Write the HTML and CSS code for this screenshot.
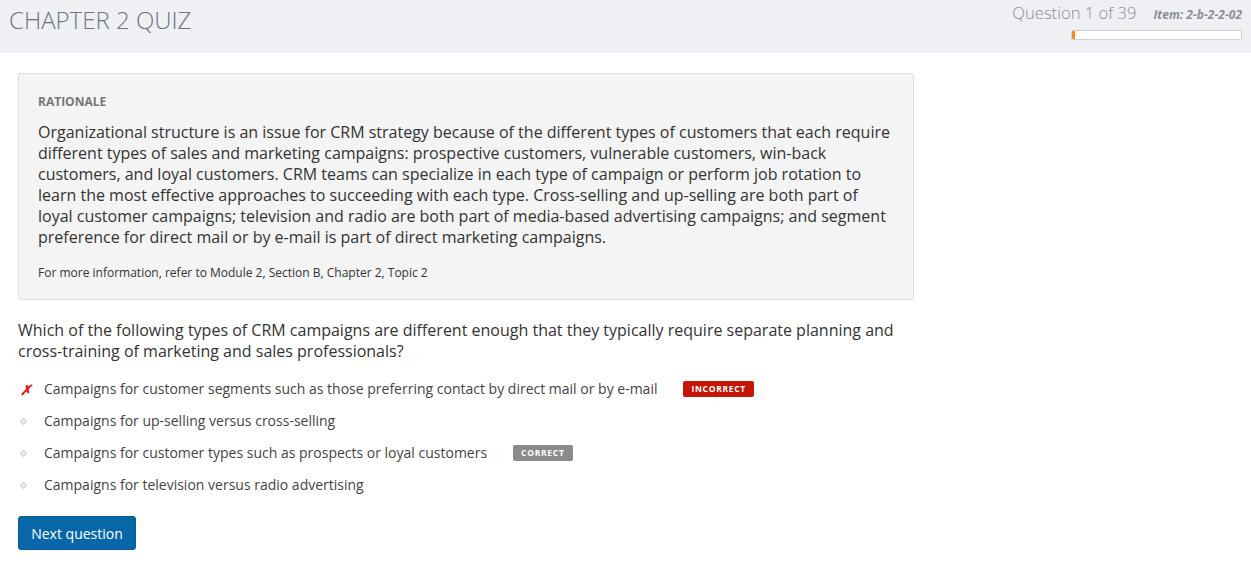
FILE: index.html
```html
<!DOCTYPE html>
<html>
<head>
<meta charset="utf-8">
<link rel="stylesheet" href="styles.css">
</head>
<body>
<header class="top">
  <h1 class="title">CHAPTER 2 QUIZ</h1>
  <div class="status">
    <div class="status-row">
      <span class="qnum">Question 1 of 39</span>
      <span class="item">Item: 2-b-2-2-02</span>
    </div>
    <div class="progress"><div class="progress-fill" style="width:2%"></div></div>
  </div>
</header>
<main class="content">
  <section class="rationale">
    <div class="rationale-label">RATIONALE</div>
    <p class="rationale-text">Organizational structure is an issue for CRM strategy because of the different types of customers that each require different types of sales and marketing campaigns: prospective customers, vulnerable customers, win-back customers, and loyal customers. CRM teams can specialize in each type of campaign or perform job rotation to learn the most effective approaches to succeeding with each type. Cross-selling and up-selling are both part of loyal customer campaigns; television and radio are both part of media-based advertising campaigns; and segment preference for direct mail or by e-mail is part of direct marketing campaigns.</p>
    <p class="rationale-ref">For more information, refer to Module 2, Section B, Chapter 2, Topic 2</p>
  </section>
  <p class="question">Which of the following types of CRM campaigns are different enough that they typically require separate planning and cross-training of marketing and sales professionals?</p>
  <ul class="options">
    <li class="option"><span class="mark wrong">✗</span><span class="opt-text">Campaigns for customer segments such as those preferring contact by direct mail or by e-mail</span><span class="badge badge-incorrect">INCORRECT</span></li>
    <li class="option"><span class="mark"><span class="diamond"></span></span><span class="opt-text">Campaigns for up-selling versus cross-selling</span></li>
    <li class="option"><span class="mark"><span class="diamond"></span></span><span class="opt-text">Campaigns for customer types such as prospects or loyal customers</span><span class="badge badge-correct">CORRECT</span></li>
    <li class="option"><span class="mark"><span class="diamond"></span></span><span class="opt-text">Campaigns for television versus radio advertising</span></li>
  </ul>
  <button class="next-btn">Next question</button>
</main>
</body>
</html>
```
FILE: styles.css
```css
* { box-sizing: border-box; }
html, body { margin: 0; padding: 0; background: #fff; }
body {
  font-family: "Open Sans", "Liberation Sans", sans-serif;
  color: #333;
}
.top {
  height: 53px;
  background: #eff0f4;
  display: flex;
  justify-content: space-between;
  align-items: flex-start;
  padding: 0 9px 0 9px;
}
.title {
  margin: 4px 0 0 0;
  font-size: 24px;
  font-weight: 300;
  color: #6b7483;
  letter-spacing: 0;
  line-height: 32px;
}
.status {
  display: flex;
  flex-direction: column;
  align-items: flex-end;
  padding-top: 3px;
}
.status-row {
  display: flex;
  align-items: baseline;
  gap: 17px;
}
.qnum {
  font-size: 16.6px;
  font-weight: 300;
  color: #8a8f98;
  line-height: 20px;
}
.item {
  font-size: 12px;
  font-weight: 700;
  font-style: italic;
  color: #8a8f98;
}
.progress {
  margin-top: 7px;
  width: 171px;
  height: 10px;
  background: #fff;
  border: 1px solid #cfcfcf;
  border-radius: 2px;
  overflow: hidden;
}
.progress-fill {
  height: 100%;
  background: #f28c1e;
}
.content {
  padding: 20px 18px 0 18px;
}
.rationale {
  width: 896px;
  background: #f4f4f4;
  border: 1px solid #dedede;
  border-radius: 3px;
  padding: 20px 20px 18px 19px;
}
.rationale-label {
  font-size: 12px;
  font-weight: 700;
  color: #777;
  line-height: 16px;
}
.rationale-text {
  margin: 12px 0 0 0;
  font-size: 16px;
  line-height: 21px;
  color: #333;
}
.rationale-ref {
  margin: 17px 0 0 0;
  font-size: 12px;
  line-height: 16px;
  color: #333;
}
.question {
  margin: 20px 0 0 0;
  width: 896px;
  font-size: 16px;
  line-height: 21px;
  color: #333;
}
.options {
  list-style: none;
  margin: 11px 0 0 0;
  padding: 0;
}
.option {
  display: flex;
  align-items: center;
  height: 32px;
  font-size: 14px;
  color: #444;
}
.mark {
  width: 26px;
  display: flex;
  align-items: center;
  padding-left: 2px;
}
.wrong {
  color: #e8141b;
  font-size: 14px;
  font-weight: 700;
  font-style: italic;
}
.diamond {
  display: block;
  width: 5px;
  height: 5px;
  margin-left: 1px;
  border: 1px solid #c4c4c4;
  transform: rotate(45deg);
}
.opt-text { line-height: 20px; }
.badge {
  display: inline-block;
  margin-left: 26px;
  font-size: 8.5px;
  font-weight: 700;
  letter-spacing: 0.7px;
  color: #fff;
  border-radius: 2px;
  padding: 1px 8px;
  line-height: 14px;
  height: 16px;
}
.badge-incorrect { background: #c41506; }
.badge-correct { background: #8b8b8b; }
.next-btn {
  margin-top: 15px;
  background: #0867a8;
  color: #fff;
  border: 1px solid #0a5a92;
  border-radius: 3px;
  font-family: "Open Sans", "Liberation Sans", sans-serif;
  font-size: 14px;
  padding: 0 12px;
  height: 34px;
  width: 118px;
}
```
